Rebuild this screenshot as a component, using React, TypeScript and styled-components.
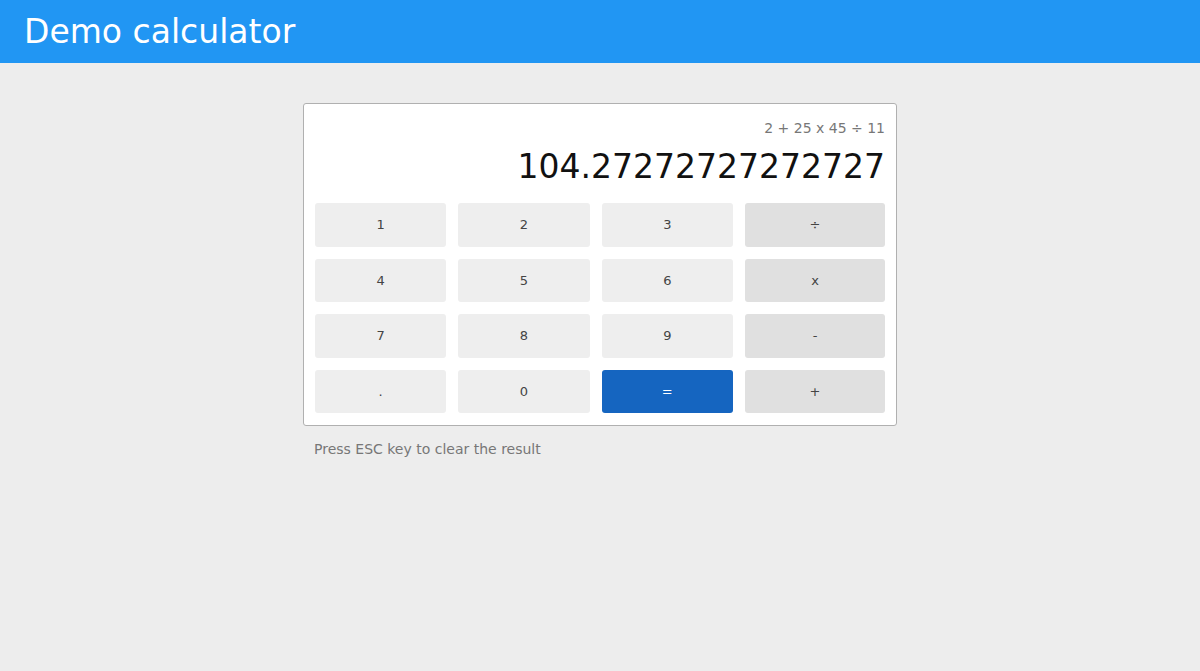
import React from "react";
import styled, { createGlobalStyle } from "styled-components";

const GlobalStyle = createGlobalStyle`
  html, body {
    margin: 0;
    padding: 0;
    background: #ededed;
    font-family: "DejaVu Sans", "Liberation Sans", sans-serif;
  }
  * { box-sizing: border-box; }
`;

const Page = styled.div`
  min-height: 671px;
  background: #ededed;
  display: flex;
  flex-direction: column;
`;

const Header = styled.header`
  height: 63px;
  background: #2196f3;
  display: flex;
  align-items: center;
  padding: 0 24px;
`;

const Title = styled.h1`
  margin: 0;
  font-size: 33px;
  font-weight: normal;
  color: #ffffff;
`;

const Main = styled.main`
  width: 594px;
  margin: 40px auto 0;
  display: flex;
  flex-direction: column;
`;

const Card = styled.div`
  background: #ffffff;
  border: 1px solid #b0b0b0;
  border-radius: 3px;
  padding: 16px 11px 12px;
  display: flex;
  flex-direction: column;
`;

const Expression = styled.div`
  text-align: right;
  font-size: 14px;
  color: #777777;
  line-height: 17px;
`;

const Result = styled.div`
  text-align: right;
  font-size: 33px;
  color: #111111;
  line-height: 38px;
  margin-top: 11px;
`;

const Keys = styled.div`
  margin-top: 17px;
  display: grid;
  grid-template-columns: 1fr 1fr 1fr 140px;
  grid-auto-rows: 43.5px;
  column-gap: 12px;
  row-gap: 12px;
`;

type Kind = "digit" | "op" | "equals";

const Key = styled.button<{ $kind: Kind }>`
  border: none;
  border-radius: 3px;
  font-family: "DejaVu Sans", sans-serif;
  font-size: 13px;
  cursor: pointer;
  background: ${(p) =>
    p.$kind === "equals" ? "#1565c0" : p.$kind === "op" ? "#e0e0e0" : "#eeeeee"};
  color: ${(p) => (p.$kind === "equals" ? "#ffffff" : "#444444")};
`;

const Hint = styled.p`
  margin: 15px 0 0 11px;
  font-size: 14px;
  color: #777777;
`;

const keys: { label: string; kind: Kind }[] = [
  { label: "1", kind: "digit" },
  { label: "2", kind: "digit" },
  { label: "3", kind: "digit" },
  { label: "÷", kind: "op" },
  { label: "4", kind: "digit" },
  { label: "5", kind: "digit" },
  { label: "6", kind: "digit" },
  { label: "x", kind: "op" },
  { label: "7", kind: "digit" },
  { label: "8", kind: "digit" },
  { label: "9", kind: "digit" },
  { label: "-", kind: "op" },
  { label: ".", kind: "digit" },
  { label: "0", kind: "digit" },
  { label: "=", kind: "equals" },
  { label: "+", kind: "op" },
];

export default function App() {
  return (
    <Page>
      <GlobalStyle />
      <Header>
        <Title>Demo calculator</Title>
      </Header>
      <Main>
        <Card>
          <Expression>2 + 25 x 45 ÷ 11</Expression>
          <Result>104.27272727272727</Result>
          <Keys>
            {keys.map((k) => (
              <Key key={k.label} $kind={k.kind}>
                {k.label}
              </Key>
            ))}
          </Keys>
        </Card>
        <Hint>Press ESC key to clear the result</Hint>
      </Main>
    </Page>
  );
}
